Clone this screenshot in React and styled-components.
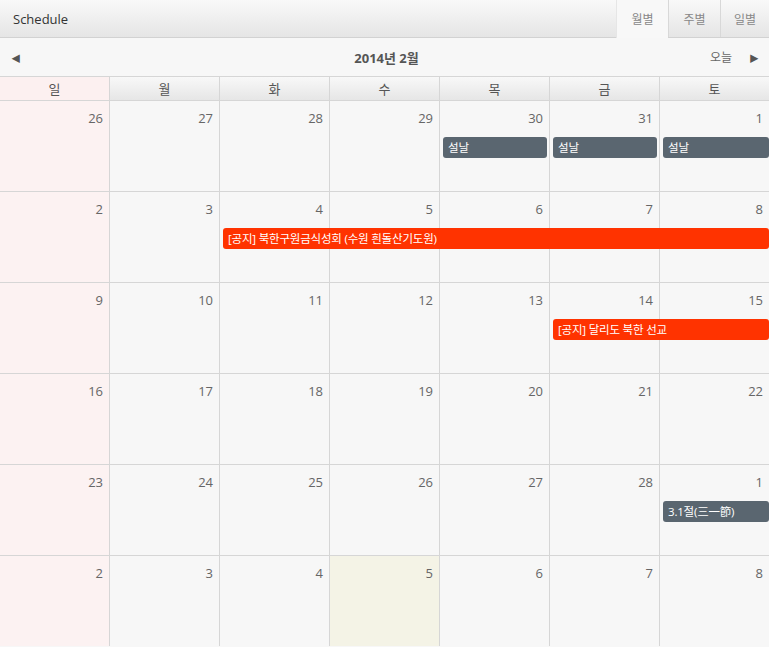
import styled, { createGlobalStyle } from 'styled-components';

const GlobalStyle = createGlobalStyle`
  html, body {
    margin: 0;
    padding: 0;
    background: #f7f7f7;
  }
  body {
    font-family: "Open Sans", "Noto Sans CJK KR", sans-serif;
  }
`;

const weeks = [
  [26, 27, 28, 29, 30, 31, 1],
  [2, 3, 4, 5, 6, 7, 8],
  [9, 10, 11, 12, 13, 14, 15],
  [16, 17, 18, 19, 20, 21, 22],
  [23, 24, 25, 26, 27, 28, 1],
  [2, 3, 4, 5, 6, 7, 8],
];

// events per week: start column (1-based), span, kind
const events = [
  [
    { col: 5, span: 1, title: '설날', kind: 'holiday' },
    { col: 6, span: 1, title: '설날', kind: 'holiday' },
    { col: 7, span: 1, title: '설날', kind: 'holiday' },
  ],
  [{ col: 3, span: 5, title: '[공지] 북한구원금식성회 (수원 흰돌산기도원)', kind: 'notice' }],
  [{ col: 6, span: 2, title: '[공지] 달리도 북한 선교', kind: 'notice' }],
  [],
  [{ col: 7, span: 1, title: '3.1절(三一節)', kind: 'holiday' }],
  [],
];

const dayNames = ['일', '월', '화', '수', '목', '금', '토'];

const App = () => {
  return (
    <Page>
      <GlobalStyle />
      <Header>
        <Title>Schedule</Title>
        <Tabs>
          <Tab $active>월별</Tab>
          <Tab>주별</Tab>
          <Tab>일별</Tab>
        </Tabs>
      </Header>
      <Toolbar>
        <Arrow>◀</Arrow>
        <MonthTitle>2014년 2월</MonthTitle>
        <ToolbarRight>
          <TodayButton>오늘</TodayButton>
          <Arrow>▶</Arrow>
        </ToolbarRight>
      </Toolbar>
      <DayHeader>
        {dayNames.map((name, i) => (
          <DayName key={name} $sunday={i === 0}>{name}</DayName>
        ))}
      </DayHeader>
      {weeks.map((week, w) => (
        <Week key={w}>
          {week.map((day, i) => (
            <Cell
              key={i}
              $col={i + 1}
              $sunday={i === 0}
              $today={w === 5 && i === 3}
            >
              {day}
            </Cell>
          ))}
          {events[w].map((ev, k) => (
            <EventBar key={k} $col={ev.col} $span={ev.span} $kind={ev.kind} $last={ev.col + ev.span === 8}>
              {ev.title}
            </EventBar>
          ))}
        </Week>
      ))}
    </Page>
  );
};

export default App;

const columns = 'repeat(6, 110px) 109px';

const Page = styled.div`
  width: 769px;
  min-height: 647px;
  background: #f7f7f7;
  overflow: hidden;
`;

const Header = styled.div`
  display: flex;
  align-items: stretch;
  justify-content: space-between;
  height: 37px;
  border-bottom: 1px solid #d2d2d2;
  background: linear-gradient(to bottom, #f9f9f9, #e5e5e5);
`;

const Title = styled.div`
  display: flex;
  align-items: center;
  padding-left: 13px;
  font-size: 13px;
  color: #333;
`;

const Tabs = styled.div`
  display: flex;
`;

const Tab = styled.div`
  display: flex;
  align-items: center;
  justify-content: center;
  width: 51px;
  border-left: 1px solid ${(p) => (p.$active ? '#e6e6e6' : '#d8d8d8')};
  font-size: 12px;
  color: #888;
  background: ${(p) => (p.$active ? '#f8f8f8' : 'transparent')};
  margin-bottom: ${(p) => (p.$active ? '-1px' : '0')};
  &:last-child {
    width: 48px;
  }
`;

const Toolbar = styled.div`
  display: grid;
  grid-template-columns: 1fr auto 1fr;
  align-items: center;
  height: 38px;
  padding: 0 10px 0 11px;
  border-bottom: 1px solid #d6d6d6;
  background: #f7f7f7;
`;

const Arrow = styled.span`
  font-size: 10px;
  color: #555;
  transform: scaleY(0.9);
`;

const MonthTitle = styled.div`
  font-size: 13px;
  font-weight: 700;
  color: #555;
  padding-left: 3px;
`;

const ToolbarRight = styled.div`
  display: flex;
  align-items: center;
  justify-content: flex-end;
  gap: 17px;
`;

const TodayButton = styled.span`
  font-size: 12px;
  color: #666;
`;

const DayHeader = styled.div`
  display: grid;
  grid-template-columns: ${columns};
  height: 23px;
  border-bottom: 1px solid #d6d6d6;
`;

const DayName = styled.div`
  display: flex;
  align-items: center;
  justify-content: center;
  font-size: 13px;
  color: #555;
  border-right: 1px solid #d6d6d6;
  background: ${(p) =>
    p.$sunday ? '#fcf0f0' : 'linear-gradient(to bottom, #f8f8f8, #e6e6e6)'};
  &:last-child {
    border-right: none;
  }
`;

const Week = styled.div`
  display: grid;
  grid-template-columns: ${columns};
  grid-template-rows: 36px 1fr;
  height: 90px;
  border-bottom: 1px solid #d6d6d6;
  &:last-child {
    border-bottom: none;
  }
`;

const Cell = styled.div`
  grid-column: ${(p) => p.$col};
  grid-row: 1 / span 2;
  border-right: 1px solid #d6d6d6;
  padding: 8px 6px 0 0;
  text-align: right;
  font-size: 13px;
  line-height: 18px;
  color: #666;
  background: ${(p) => (p.$sunday ? '#fcf2f2' : p.$today ? '#f4f3e6' : '#f7f7f7')};
  &:nth-child(7) {
    border-right: none;
  }
`;

const EventBar = styled.div`
  grid-column: ${(p) => `${p.$col} / span ${p.$span}`};
  grid-row: 2;
  align-self: start;
  z-index: 1;
  height: 21px;
  line-height: 21px;
  margin: 0 ${(p) => (p.$last ? '0' : '3px')} 0 3px;
  padding-left: 5px;
  border-radius: 3px;
  font-size: 11.5px;
  letter-spacing: -0.2px;
  color: #fff;
  white-space: nowrap;
  overflow: hidden;
  background: ${(p) => (p.$kind === 'notice' ? '#ff3300' : '#5a6670')};
`;
